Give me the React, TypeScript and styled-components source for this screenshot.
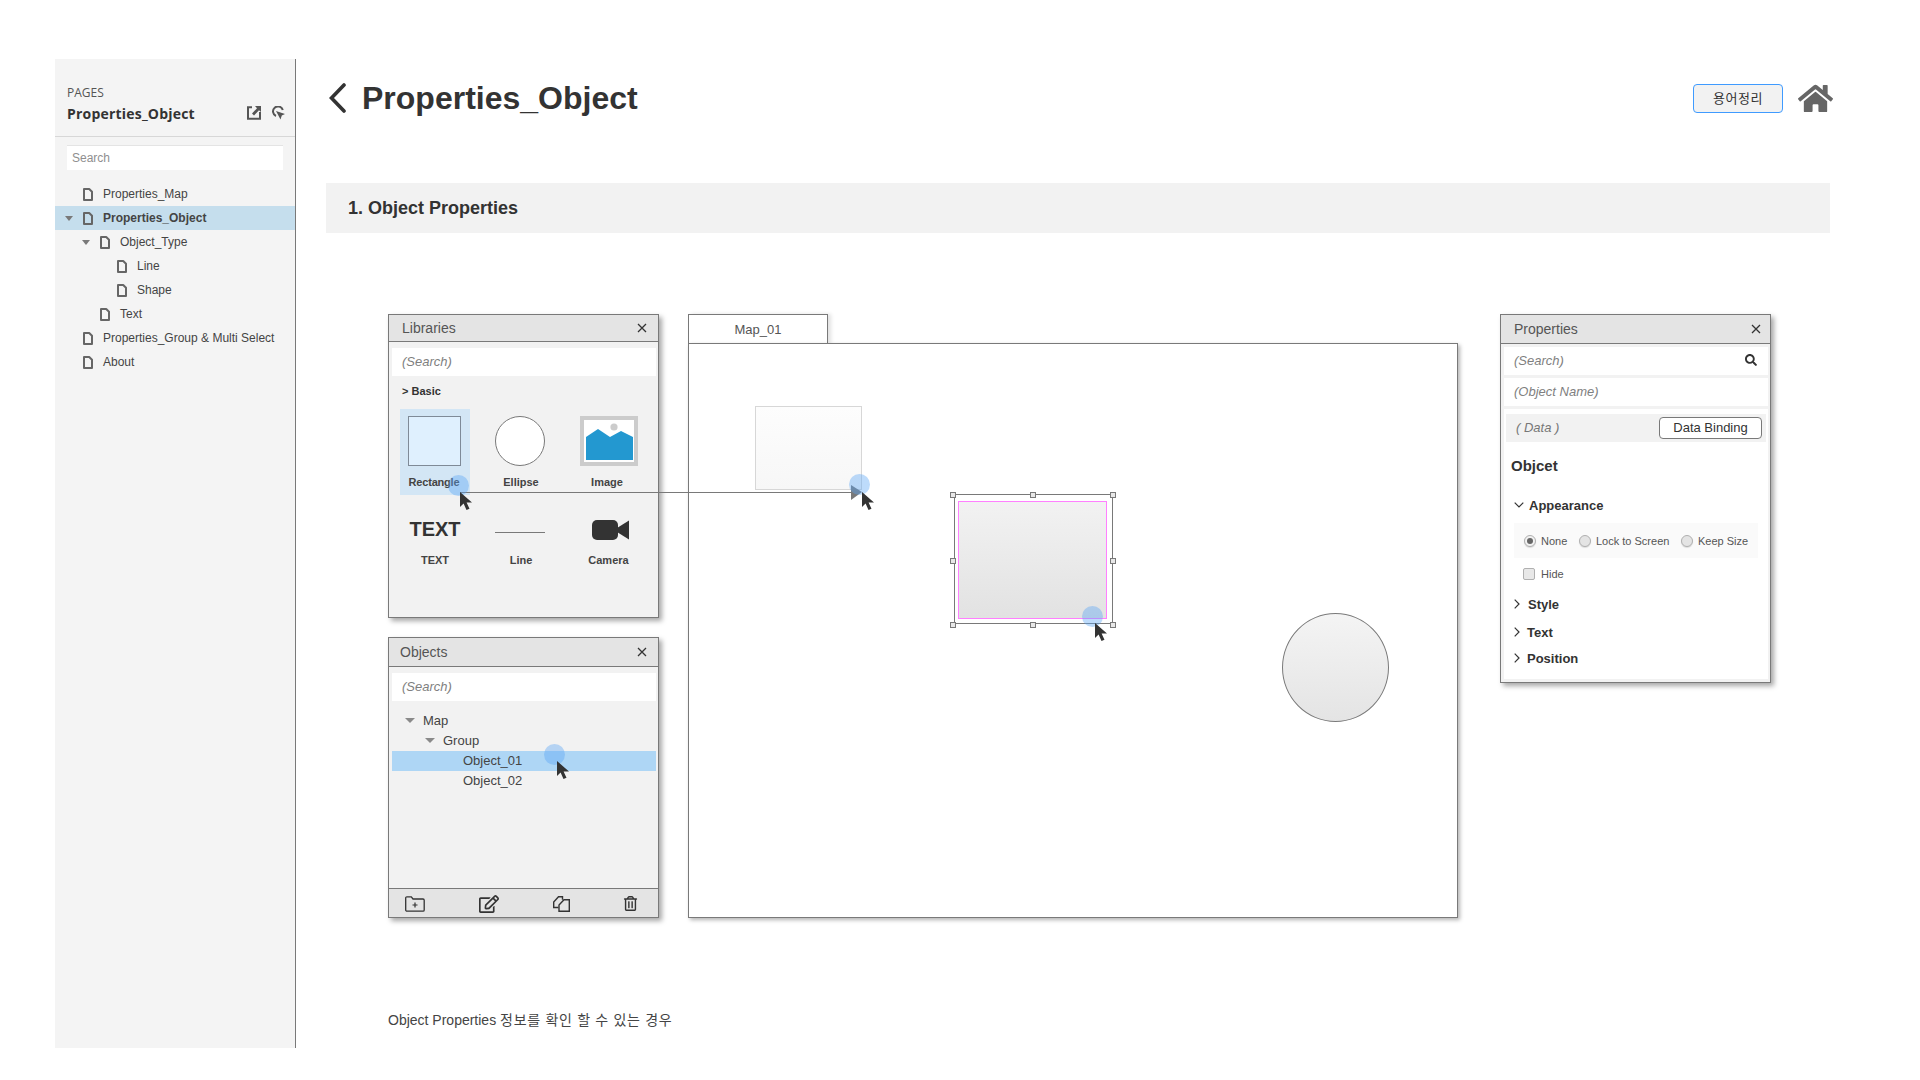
import React from "react";
import styled, { createGlobalStyle } from "styled-components";
import { FaHome, FaRegEdit, FaRegTrashAlt, FaSearch } from "react-icons/fa";

const GlobalStyle = createGlobalStyle`
  html, body { margin: 0; padding: 0; background: #fff; }
  body { font-family: "Liberation Sans", "Noto Sans CJK KR", sans-serif; color: #333; }
  * { box-sizing: border-box; }
`;

const Frame = styled.div`
  display: flex;
  height: 989px;
  margin: 59px 0 0 55px;
  overflow: hidden;
`;

/* ---------- sidebar ---------- */
const Sidebar = styled.aside`
  width: 241px;
  flex: none;
  background: #f4f4f4;
  border-right: 1px solid #797979;
`;
const SideHead = styled.div`
  height: 78px;
  padding: 27px 12px 0;
  border-bottom: 1px solid #d7d7d7;
`;
const PagesLabel = styled.div`
  font: 12px/14px "Open Sans", sans-serif;
  color: #555;
`;
const SideTitleRow = styled.div`
  display: flex;
  align-items: center;
  justify-content: space-between;
  margin-top: 5px;
  height: 18px;
`;
const SideTitle = styled.div`
  font: 700 14px/18px "Open Sans", sans-serif;
  letter-spacing: 0.2px;
  color: #333;
`;
const SideTools = styled.div`
  display: flex;
  gap: 10px;
  margin: -2px -2px 0 0;
`;
const SideSearch = styled.div`
  height: 25px;
  margin: 8px 12px 12px;
  padding-left: 5px;
  background: #fff;
  border-top: 1px solid #e4e4e4;
  font-size: 12px;
  line-height: 24px;
  color: #8f8f8f;
`;
const PageRow = styled.div<{ $level: number; $active?: boolean }>`
  display: flex;
  align-items: center;
  height: 24px;
  padding-left: ${(p) => 28 + p.$level * 17}px;
  background: ${(p) => (p.$active ? "#c5deed" : "transparent")};
  font-size: 12px;
  font-weight: ${(p) => (p.$active ? 700 : 400)};
  color: #444;
  position: relative;
`;
const PageCaret = styled.span`
  position: absolute;
  margin-left: -18px;
  width: 0;
  height: 0;
  border-left: 4px solid transparent;
  border-right: 4px solid transparent;
  border-top: 5px solid #797979;
`;
const PageText = styled.span`
  margin-left: 10px;
  white-space: nowrap;
`;

/* ---------- main ---------- */
const Main = styled.main`
  flex: 1;
  min-width: 0;
  padding: 0 90px 0 30px;
  overflow: hidden;
`;
const Header = styled.header`
  display: flex;
  align-items: center;
  justify-content: space-between;
  height: 78px;
  margin-bottom: 46px;
  padding-left: 3px;
`;
const TitleGroup = styled.div`
  display: flex;
  align-items: center;
  gap: 16px;
`;
const Title = styled.h1`
  margin: 0;
  font-size: 32px;
  line-height: 40px;
  font-weight: 700;
  color: #333;
`;
const HeadActions = styled.div`
  display: flex;
  align-items: center;
  gap: 15px;
  margin-right: -3px;
  color: #666;
`;
const GlossaryButton = styled.div`
  width: 90px;
  height: 29px;
  border: 1px solid #3f9bff;
  border-radius: 4px;
  background: #f2f2f2;
  font-size: 13px;
  letter-spacing: 0.5px;
  line-height: 27px;
  text-align: center;
  color: #333;
`;
const SectionBar = styled.h2`
  margin: 0;
  height: 50px;
  padding-left: 22px;
  background: #f2f2f2;
  font-size: 18px;
  line-height: 50px;
  font-weight: 700;
  color: #333;
`;

const Diagram = styled.div`
  position: relative;
  display: flex;
  align-items: flex-start;
  margin: 81px 0 0 62px;
  height: 604px;
`;
const LeftColumn = styled.div`
  display: flex;
  flex-direction: column;
  gap: 19px;
  width: 271px;
  flex: none;
`;
const Panel = styled.section<{ $h: number }>`
  display: flex;
  flex-direction: column;
  height: ${(p) => p.$h}px;
  width: 271px;
  flex: none;
  background: #f2f2f2;
  border: 1px solid #797979;
  box-shadow: 3px 3px 5px rgba(0, 0, 0, 0.35);
`;
const PanelHead = styled.div<{ $h: number; $pad: number; $end?: number }>`
  display: flex;
  align-items: center;
  justify-content: space-between;
  flex: none;
  height: ${(p) => p.$h}px;
  padding: 0 ${(p) => p.$end ?? 11}px 0 ${(p) => p.$pad}px;
  background: #e4e4e4;
  border-bottom: 1px solid #797979;
  font-size: 14px;
  color: #555;
`;
const SearchField = styled.div<{ $mt?: number }>`
  display: flex;
  align-items: center;
  justify-content: space-between;
  height: 28px;
  flex: none;
  margin: ${(p) => p.$mt ?? 6}px 2px 0 3px;
  padding: 0 11px 2px 10px;
  background: #fff;
  font-size: 13px;
  font-style: italic;
  color: #7f7f7f;
`;
const BasicLabel = styled.div`
  margin-top: 7px;
  padding-left: 13px;
  font-size: 11px;
  line-height: 16px;
  font-weight: 700;
  color: #333;
`;
const LibGrid = styled.div`
  display: grid;
  grid-template-columns: repeat(3, 86px);
  margin: 10px 0 0 3px;
`;
const LibItem = styled.div<{ $active?: boolean; $compact?: boolean }>`
  display: flex;
  flex-direction: column;
  align-items: center;
  width: 70px;
  height: ${(p) => (p.$compact ? 75 : 86)}px;
  justify-self: center;
  padding-top: ${(p) => (p.$compact ? 15 : 7)}px;
  background: ${(p) => (p.$active ? "#d3e6f5" : "transparent")};
`;
const LibIcon = styled.div<{ $compact?: boolean; $shift?: number; $lift?: number }>`
  display: flex;
  align-items: center;
  justify-content: center;
  height: ${(p) => (p.$compact ? 40 : 50)}px;
  margin-left: ${(p) => p.$shift ?? 0}px;
  padding-top: ${(p) => p.$lift ?? 0}px;
  flex: none;
`;
const LibLabel = styled.div<{ $compact?: boolean; $nudge?: number; $tight?: boolean }>`
  margin-top: ${(p) => (p.$compact ? 2 : 8)}px;
  margin-left: ${(p) => p.$nudge ?? 0}px;
  font-size: 11px;
  line-height: 16px;
  font-weight: 700;
  letter-spacing: ${(p) => (p.$tight ? "-0.2px" : "0")};
  color: #444;
  white-space: nowrap;
`;
const RectSwatch = styled.div`
  width: 53px;
  height: 50px;
  margin-left: -2px;
  background: #dff0fe;
  border: 1px solid #7f8a97;
`;
const EllipseSwatch = styled.div`
  width: 50px;
  height: 50px;
  border-radius: 50%;
  background: #fff;
  border: 1px solid #797979;
`;
const TextSwatch = styled.div`
  font-size: 20px;
  line-height: 24px;
  font-weight: 700;
  color: #333;
  margin-top: -2px;
`;
const LineSwatch = styled.div`
  width: 50px;
  height: 1px;
  background: #797979;
`;

const Tree = styled.div`
  margin: 10px 2px 0 3px;
`;
const TreeRow = styled.div<{ $level: number; $active?: boolean }>`
  position: relative;
  display: flex;
  align-items: center;
  height: 20px;
  padding: 0 0 2px ${(p) => 31 + p.$level * 20}px;
  background: ${(p) => (p.$active ? "#aed6f5" : "transparent")};
  font-size: 13px;
  color: #444;
`;
const TreeCaret = styled.span`
  position: absolute;
  margin-left: -18px;
  width: 0;
  height: 0;
  border-left: 5px solid transparent;
  border-right: 5px solid transparent;
  border-top: 5px solid #8a8a8a;
`;
const PanelFoot = styled.div`
  display: flex;
  align-items: center;
  height: 29px;
  flex: none;
  margin-top: auto;
  padding: 1px 0 0 16px;
  background: #e4e4e4;
  border-top: 1px solid #797979;
  color: #333;
`;
const FootSlot = styled.div<{ $ml?: number }>`
  display: flex;
  align-items: center;
  justify-content: center;
  width: 20px;
  margin-left: ${(p) => p.$ml ?? 0}px;
`;

/* map */
const MapColumn = styled.div`
  width: 770px;
  flex: none;
  margin: 0 42px 0 29px;
`;
const MapTab = styled.div`
  width: 140px;
  height: 30px;
  margin-bottom: -1px;
  position: relative;
  border: 1px solid #797979;
  border-bottom: none;
  background: #fff;
  box-shadow: 3px 0 4px rgba(0, 0, 0, 0.12);
  font-size: 13px;
  line-height: 29px;
  text-align: center;
  color: #555;
`;
const MapBody = styled.div`
  position: relative;
  height: 575px;
  background: #fff;
  border: 1px solid #797979;
  box-shadow: 2px 2px 4px rgba(0, 0, 0, 0.3);
`;
const GhostRect = styled.div`
  position: absolute;
  left: 66px;
  top: 62px;
  width: 107px;
  height: 84px;
  border: 1px solid #d7d7d7;
  background: linear-gradient(#fdfdfd, #f7f7f7);
`;
const Selection = styled.div`
  position: absolute;
  left: 265px;
  top: 150px;
  width: 159px;
  height: 130px;
  border: 1px solid #797979;
`;
const SelectedShape = styled.div`
  position: absolute;
  left: 3px;
  top: 6px;
  width: 149px;
  height: 118px;
  border: 1px solid #ff80ff;
  background: linear-gradient(#f2f2f2, #e2e2e2);
`;
const Handle = styled.span<{ $x: number; $y: number }>`
  position: absolute;
  left: ${(p) => p.$x}px;
  top: ${(p) => p.$y}px;
  width: 6px;
  height: 6px;
  background: #e8e8e8;
  border: 1px solid #797979;
`;
const CircleShape = styled.div`
  position: absolute;
  left: 593px;
  top: 269px;
  width: 107px;
  height: 109px;
  border-radius: 50%;
  border: 1px solid #797979;
  background: linear-gradient(#f4f4f4, #e4e4e4);
`;

/* properties */
const WhiteBlock = styled.div`
  margin: 3px 2px 0 3px;
  height: 270px;
  background: #fff;
  padding-top: 5px;
`;
const DataRow = styled.div`
  display: flex;
  align-items: center;
  justify-content: space-between;
  height: 28px;
  margin: 0 2px;
  padding: 0 4px 0 10px;
  background: #f2f2f2;
  font-size: 13px;
  font-style: italic;
  color: #777;
`;
const DataText = styled.span`
  margin-top: -2px;
`;
const BindButton = styled.div`
  width: 103px;
  height: 22px;
  border: 1px solid #797979;
  border-radius: 4px;
  background: #fff;
  font-size: 13px;
  font-style: normal;
  line-height: 20px;
  text-align: center;
  color: #333;
`;
const ObjectHeading = styled.div`
  margin-top: 14px;
  padding-left: 7px;
  font-size: 15px;
  line-height: 20px;
  font-weight: 700;
  color: #333;
`;
const GroupRow = styled.div<{ $mt: number; $gap: number }>`
  display: flex;
  align-items: center;
  gap: ${(p) => p.$gap}px;
  height: 20px;
  margin-top: ${(p) => p.$mt}px;
  padding-left: 10px;
  font-size: 13px;
  font-weight: 700;
  color: #333;
`;
const RadioRow = styled.div`
  display: flex;
  align-items: center;
  height: 35px;
  margin: 8px 10px 0;
  padding-left: 10px;
  background: #fafafa;
`;
const RadioItem = styled.div<{ $w: number }>`
  display: flex;
  align-items: center;
  gap: 5px;
  width: ${(p) => p.$w}px;
  flex: none;
  font-size: 11px;
  color: #555;
  white-space: nowrap;
`;
const RadioMark = styled.span<{ $on?: boolean }>`
  display: flex;
  align-items: center;
  justify-content: center;
  width: 12px;
  height: 12px;
  flex: none;
  border-radius: 50%;
  border: 1px solid #b0b0b0;
  background: ${(p) => (p.$on ? "#f2f2f2" : "#e4e4e4")};
  box-shadow: 0 1px 1px rgba(0, 0, 0, 0.12);
`;
const RadioDot = styled.span`
  width: 6px;
  height: 6px;
  border-radius: 50%;
  background: #666;
`;
const HideRow = styled.div`
  display: flex;
  align-items: center;
  gap: 6px;
  height: 20px;
  margin-top: 6px;
  padding-left: 19px;
  font-size: 11px;
  color: #555;
`;
const CheckMark = styled.span`
  width: 12px;
  height: 12px;
  border: 1px solid #b0b0b0;
  border-radius: 2px;
  background: #e8e8e8;
`;

/* overlays */
const ConnectorLine = styled.div`
  position: absolute;
  left: 72px;
  top: 178px;
  width: 392px;
  height: 1px;
  background: #797979;
`;
const ArrowHead = styled.div`
  position: absolute;
  left: 463px;
  top: 171px;
  width: 0;
  height: 0;
  border-left: 11px solid #797979;
  border-top: 7px solid transparent;
  border-bottom: 8px solid transparent;
`;
const TouchDot = styled.span<{ $x: number; $y: number }>`
  position: absolute;
  left: ${(p) => p.$x - 388 - 10.5}px;
  top: ${(p) => p.$y - 314 - 10.5}px;
  width: 21px;
  height: 21px;
  border-radius: 50%;
  background: rgba(90, 165, 245, 0.4);
`;
const CursorMark = styled.svg<{ $x: number; $y: number }>`
  position: absolute;
  left: ${(p) => p.$x - 388}px;
  top: ${(p) => p.$y - 314}px;
`;
const Note = styled.p`
  margin: 92px 0 0 62px;
  font-size: 14px;
  line-height: 20px;
  color: #444;
`;
const NoteKorean = styled.span`
  letter-spacing: 0.7px;
`;

/* ---------- icons ---------- */
const PageIcon = () => (
  <svg width="10" height="13" viewBox="0 0 10 13" fill="none" style={{ flex: "none" }}>
    <path d="M1 1h5.2L9 3.8V12H1z" stroke="#666" strokeWidth="2" strokeLinejoin="round" />
  </svg>
);
const CloseIcon = () => (
  <svg width="10" height="10" viewBox="0 0 10 10">
    <path d="M1 1l8 8M9 1l-8 8" stroke="#333" strokeWidth="1.3" />
  </svg>
);
const ExportIcon = () => (
  <svg width="14" height="14" viewBox="0 0 14 14">
    <path d="M5 1.2H1v11.6h12V6" fill="none" stroke="#555" strokeWidth="2" />
    <path d="M8 0h6v6l-2-1.8-5 5.3-2-2 5-5.2z" fill="#555" />
  </svg>
);
const PinIcon = () => (
  <svg width="14" height="14" viewBox="0 0 14 14">
    <path d="M11.8 4A5 5 0 1 0 5 10" fill="none" stroke="#555" strokeWidth="2" />
    <path d="M5 5l9 3-3.2 1.4L9.5 13.5z" fill="#555" />
  </svg>
);
const BackChevron = () => (
  <svg width="17" height="30" viewBox="0 0 17 30" style={{ flex: "none" }}>
    <path d="M15 2L2.5 15 15 28" fill="none" stroke="#333" strokeWidth="3.6" strokeLinecap="round" />
  </svg>
);
const ImageSwatch = () => (
  <svg width="58" height="50" viewBox="0 0 58 50">
    <rect width="58" height="50" fill="#ccc" />
    <rect x="4" y="4" width="50" height="42" fill="#fff" />
    <circle cx="34" cy="11" r="3.6" fill="#ccc" />
    <path d="M6 44V21l12-8 12 8 11-6 12 6v23z" fill="#2398d0" />
  </svg>
);
const CameraIcon = () => (
  <svg width="37" height="20" viewBox="0 0 37 20">
    <rect width="26" height="20" rx="5" fill="#333" />
    <path d="M25 8l12-7.5v19L25 12z" fill="#333" />
  </svg>
);
const FolderPlus = () => (
  <svg width="20" height="16" viewBox="0 0 20 16" fill="none">
    <path d="M.7 14V2c0-.7.5-1.2 1.2-1.2h4.4L8 3h10c.7 0 1.2.5 1.2 1.2V14c0 .7-.5 1.2-1.2 1.2H2c-.7 0-1.3-.5-1.3-1.2z" stroke="#333" strokeWidth="1.3" />
    <path d="M10 6.5v5M7.5 9h5" stroke="#333" strokeWidth="1.2" />
  </svg>
);
const CopyDocs = () => (
  <svg width="17" height="16" viewBox="0 0 17 16" fill="none">
    <path d="M5.5 11.5H.7V6L5.5.7h4v3" stroke="#333" strokeWidth="1.4" />
    <path d="M6 15.3V9l5-5.3h5.3v11.6z" stroke="#333" strokeWidth="1.4" />
  </svg>
);
const Cursor = ({ x, y }: { x: number; y: number }) => (
  <CursorMark $x={x} $y={y} width="12" height="18" viewBox="0 0 12 18">
    <path d="M0 0v15l3.6-3.4L6.5 18l3-1.3-2.9-6.2H12z" fill="#333" />
  </CursorMark>
);
const Chevron = ({ open }: { open?: boolean }) =>
  open ? (
    <svg width="10" height="6" viewBox="0 0 10 6" style={{ flex: "none" }}>
      <path d="M.7.7L5 5l4.3-4.3" fill="none" stroke="#333" strokeWidth="1.2" />
    </svg>
  ) : (
    <svg width="6" height="10" viewBox="0 0 6 10" style={{ flex: "none" }}>
      <path d="M.7.7L5 5 .7 9.3" fill="none" stroke="#333" strokeWidth="1.2" />
    </svg>
  );

const handles = [
  [-5, -3],
  [75, -3],
  [155, -3],
  [-5, 63],
  [155, 63],
  [-5, 127],
  [75, 127],
  [155, 127],
];

const pages = [
  { name: "Properties_Map", level: 0 },
  { name: "Properties_Object", level: 0, active: true, caret: true },
  { name: "Object_Type", level: 1, caret: true },
  { name: "Line", level: 2 },
  { name: "Shape", level: 2 },
  { name: "Text", level: 1 },
  { name: "Properties_Group & Multi Select", level: 0 },
  { name: "About", level: 0 },
];

export default function App() {
  return (
    <>
      <GlobalStyle />
      <Frame>
        <Sidebar>
          <SideHead>
            <PagesLabel>PAGES</PagesLabel>
            <SideTitleRow>
              <SideTitle>Properties_Object</SideTitle>
              <SideTools>
                <ExportIcon />
                <PinIcon />
              </SideTools>
            </SideTitleRow>
          </SideHead>
          <SideSearch>Search</SideSearch>
          {pages.map((p) => (
            <PageRow key={p.name} $level={p.level} $active={p.active}>
              {p.caret && <PageCaret />}
              <PageIcon />
              <PageText>{p.name}</PageText>
            </PageRow>
          ))}
        </Sidebar>
        <Main>
          <Header>
            <TitleGroup>
              <BackChevron />
              <Title>Properties_Object</Title>
            </TitleGroup>
            <HeadActions>
              <GlossaryButton>용어정리</GlossaryButton>
              <FaHome size={35} />
            </HeadActions>
          </Header>
          <SectionBar>1. Object Properties</SectionBar>
          <Diagram>
            <LeftColumn>
              <Panel $h={304}>
                <PanelHead $h={27} $pad={13}>
                  Libraries
                  <CloseIcon />
                </PanelHead>
                <SearchField>(Search)</SearchField>
                <BasicLabel>&gt; Basic</BasicLabel>
                <LibGrid>
                  <LibItem $active>
                    <LibIcon>
                      <RectSwatch />
                    </LibIcon>
                    <LibLabel $nudge={-2} $tight>Rectangle</LibLabel>
                  </LibItem>
                  <LibItem>
                    <LibIcon $shift={-2}>
                      <EllipseSwatch />
                    </LibIcon>
                    <LibLabel>Ellipse</LibLabel>
                  </LibItem>
                  <LibItem>
                    <LibIcon $shift={4}>
                      <ImageSwatch />
                    </LibIcon>
                    <LibLabel>Image</LibLabel>
                  </LibItem>
                  <LibItem $compact>
                    <LibIcon $compact>
                      <TextSwatch>TEXT</TextSwatch>
                    </LibIcon>
                    <LibLabel $compact>TEXT</LibLabel>
                  </LibItem>
                  <LibItem $compact>
                    <LibIcon $compact $shift={-2} $lift={5}>
                      <LineSwatch />
                    </LibIcon>
                    <LibLabel $compact>Line</LibLabel>
                  </LibItem>
                  <LibItem $compact>
                    <LibIcon $compact $shift={6}>
                      <CameraIcon />
                    </LibIcon>
                    <LibLabel $compact $nudge={3}>Camera</LibLabel>
                  </LibItem>
                </LibGrid>
              </Panel>
              <Panel $h={281}>
                <PanelHead $h={29} $pad={11}>
                  Objects
                  <CloseIcon />
                </PanelHead>
                <SearchField>(Search)</SearchField>
                <Tree>
                  <TreeRow $level={0}>
                    <TreeCaret />
                    Map
                  </TreeRow>
                  <TreeRow $level={1}>
                    <TreeCaret />
                    Group
                  </TreeRow>
                  <TreeRow $level={2} $active>
                    Object_01
                  </TreeRow>
                  <TreeRow $level={2}>Object_02</TreeRow>
                </Tree>
                <PanelFoot>
                  <FootSlot>
                    <FolderPlus />
                  </FootSlot>
                  <FootSlot $ml={54}>
                    <FaRegEdit size={20} />
                  </FootSlot>
                  <FootSlot $ml={52}>
                    <CopyDocs />
                  </FootSlot>
                  <FootSlot $ml={49}>
                    <FaRegTrashAlt size={15} />
                  </FootSlot>
                </PanelFoot>
              </Panel>
            </LeftColumn>
            <MapColumn>
              <MapTab>Map_01</MapTab>
              <MapBody>
                <GhostRect />
                <Selection>
                  <SelectedShape />
                  {handles.map(([x, y]) => (
                    <Handle key={`${x}-${y}`} $x={x} $y={y} />
                  ))}
                </Selection>
                <CircleShape />
              </MapBody>
            </MapColumn>
            <Panel $h={369}>
              <PanelHead $h={29} $pad={13} $end={9}>
                Properties
                <CloseIcon />
              </PanelHead>
              <SearchField $mt={3}>
                (Search)
                <FaSearch size={12} color="#333" />
              </SearchField>
              <SearchField $mt={3}>(Object Name)</SearchField>
              <WhiteBlock>
                <DataRow>
                  <DataText>( Data )</DataText>
                  <BindButton>Data Binding</BindButton>
                </DataRow>
                <ObjectHeading>Objcet</ObjectHeading>
                <GroupRow $mt={19} $gap={5}>
                  <Chevron open />
                  Appearance
                </GroupRow>
                <RadioRow>
                  <RadioItem $w={55}>
                    <RadioMark $on>
                      <RadioDot />
                    </RadioMark>
                    None
                  </RadioItem>
                  <RadioItem $w={102}>
                    <RadioMark />
                    Lock to Screen
                  </RadioItem>
                  <RadioItem $w={70}>
                    <RadioMark />
                    Keep Size
                  </RadioItem>
                </RadioRow>
                <HideRow>
                  <CheckMark />
                  Hide
                </HideRow>
                <GroupRow $mt={10} $gap={8}>
                  <Chevron />
                  Style
                </GroupRow>
                <GroupRow $mt={8} $gap={7}>
                  <Chevron />
                  Text
                </GroupRow>
                <GroupRow $mt={6} $gap={7}>
                  <Chevron />
                  Position
                </GroupRow>
              </WhiteBlock>
            </Panel>
            <ConnectorLine />
            <ArrowHead />
            <TouchDot $x={458} $y={485} />
            <Cursor x={460} y={492} />
            <TouchDot $x={859} $y={484} />
            <Cursor x={862} y={492} />
            <TouchDot $x={1092} $y={616} />
            <Cursor x={1095} y={623} />
            <TouchDot $x={554} $y={754} />
            <Cursor x={557} y={761} />
          </Diagram>
          <Note>
            Object Properties <NoteKorean>정보를 확인 할 수 있는 경우</NoteKorean>
          </Note>
        </Main>
      </Frame>
    </>
  );
}
